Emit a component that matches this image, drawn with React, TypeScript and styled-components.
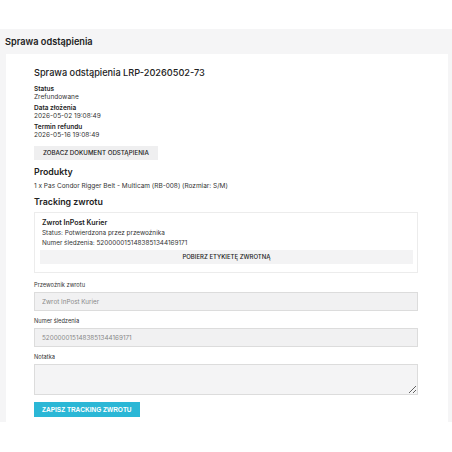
import React from 'react';
import styled, { createGlobalStyle } from 'styled-components';

const GlobalStyle = createGlobalStyle`
    body {
        margin: 0;
        background: #ffffff;
        font-family: Inter, "Noto Sans", sans-serif;
        color: #222;
    }
`;

const App: React.FC = () => {
    return (
        <>
            <GlobalStyle />
            <Page>
                <TopBar>Sprawa odstąpienia</TopBar>
                <Card>
                    <Title>Sprawa odstąpienia LRP-20260502-73</Title>
                    <Field>
                        <FieldLabel>Status</FieldLabel>
                        <FieldValue>Zrefundowane</FieldValue>
                    </Field>
                    <Field>
                        <FieldLabel>Data złożenia</FieldLabel>
                        <FieldValue>2026-05-02 19:08:49</FieldValue>
                    </Field>
                    <Field>
                        <FieldLabel>Termin refundu</FieldLabel>
                        <FieldValue>2026-05-16 19:08:49</FieldValue>
                    </Field>
                    <GreyButton>ZOBACZ DOKUMENT ODSTĄPIENIA</GreyButton>
                    <SectionTitle>Produkty</SectionTitle>
                    <ProductLine>1 x Pas Condor Rigger Belt - Multicam (RB-008) (Rozmiar: S/M)</ProductLine>
                    <SectionTitle>Tracking zwrotu</SectionTitle>
                    <TrackingBox>
                        <BoxTitle>Zwrot InPost Kurier</BoxTitle>
                        <BoxLine>Status: Potwierdzona przez przewoźnika</BoxLine>
                        <BoxLine>Numer śledzenia: 5200000151483851344169171</BoxLine>
                        <WideButton>POBIERZ ETYKIETĘ ZWROTNĄ</WideButton>
                    </TrackingBox>
                    <FormGroup $first>
                        <InputLabel>Przewoźnik zwrotu</InputLabel>
                        <Input readOnly value="Zwrot InPost Kurier" />
                    </FormGroup>
                    <FormGroup>
                        <InputLabel>Numer śledzenia</InputLabel>
                        <Input readOnly value="5200000151483851344169171" />
                    </FormGroup>
                    <FormGroup>
                        <InputLabel>Notatka</InputLabel>
                        <TextArea />
                    </FormGroup>
                    <SaveButton>ZAPISZ TRACKING ZWROTU</SaveButton>
                </Card>
            </Page>
        </>
    );
};

export default App;

const Page = styled.div`
    margin-top: 29px;
    background: #f5f5f6;
    padding: 0 4px 0 6px;
`;

const TopBar = styled.div`
    height: 25px;
    display: flex;
    align-items: center;
    margin-left: -1px;
    font-size: 9.2px;
    font-weight: 600;
    color: #222;
`;

const Card = styled.div`
    background: #ffffff;
    padding: 13px 30px 5px 28px;
    display: flex;
    flex-direction: column;
    align-items: flex-start;
`;

const Title = styled.div`
    font-size: 9.2px;
    font-weight: 500;
    line-height: 12px;
    color: #222;
    margin-bottom: 5.5px;
`;

const Field = styled.div`
    display: flex;
    flex-direction: column;
    margin-bottom: 3px;
`;

const FieldLabel = styled.div`
    font-size: 6.5px;
    font-weight: 600;
    line-height: 8px;
    color: #222;
`;

const FieldValue = styled.div`
    font-size: 6.5px;
    line-height: 8px;
    color: #333;
`;

const GreyButton = styled.div`
    margin-top: 4px;
    background: #efeff0;
    font-size: 6.2px;
    font-weight: 500;
    color: #222;
    padding: 3.5px 9px;
    line-height: 7px;
`;

const SectionTitle = styled.div`
    font-size: 8.8px;
    font-weight: 600;
    color: #222;
    margin-top: 6px;
    line-height: 12px;

    & + div {
        margin-top: 4.5px;
    }
`;

const ProductLine = styled.div`
    font-size: 6.5px;
    line-height: 9px;
    color: #333;
    margin-bottom: -1.5px;
`;

const TrackingBox = styled.div`
    align-self: stretch;
    margin-top: 4px;
    border: 1px solid #ececec;
    padding: 5px 4px 8px 7px;
    display: flex;
    flex-direction: column;
`;

const BoxTitle = styled.div`
    font-size: 7px;
    font-weight: 600;
    line-height: 10px;
    color: #222;
`;

const BoxLine = styled.div`
    font-size: 6.4px;
    line-height: 10px;
    color: #333;
`;

const WideButton = styled.div`
    margin: 2px 0 0 -2px;
    background: #f3f3f4;
    font-size: 6px;
    font-weight: 500;
    color: #222;
    text-align: center;
    padding: 4px 0;
    line-height: 6px;
`;

const FormGroup = styled.div<{ $first?: boolean }>`
    align-self: stretch;
    display: flex;
    flex-direction: column;
    margin-top: ${({ $first }) => ($first ? '8px' : '6px')};
`;

const InputLabel = styled.label`
    font-size: 5.7px;
    color: #333;
    line-height: 8px;
    margin-bottom: 3px;
`;

const Input = styled.input`
    height: 19px;
    box-sizing: border-box;
    border: 1px solid #dcdcdc;
    background: #f1f1f2;
    font-family: Inter, "Noto Sans", sans-serif;
    font-size: 6.3px;
    color: #888;
    padding: 0 7px;
    outline: none;
`;

const TextArea = styled.textarea`
    height: 31px;
    box-sizing: border-box;
    border: 1px solid #dcdcdc;
    background: #f4f4f5;
    resize: vertical;
    outline: none;
    display: block;
`;

const SaveButton = styled.div`
    margin-top: 7px;
    background: #2bb7d6;
    color: #ffffff;
    font-family: "Liberation Sans", Arial, sans-serif;
    font-size: 6.5px;
    font-weight: 700;
    padding: 4px 8px;
    line-height: 7px;
`;
